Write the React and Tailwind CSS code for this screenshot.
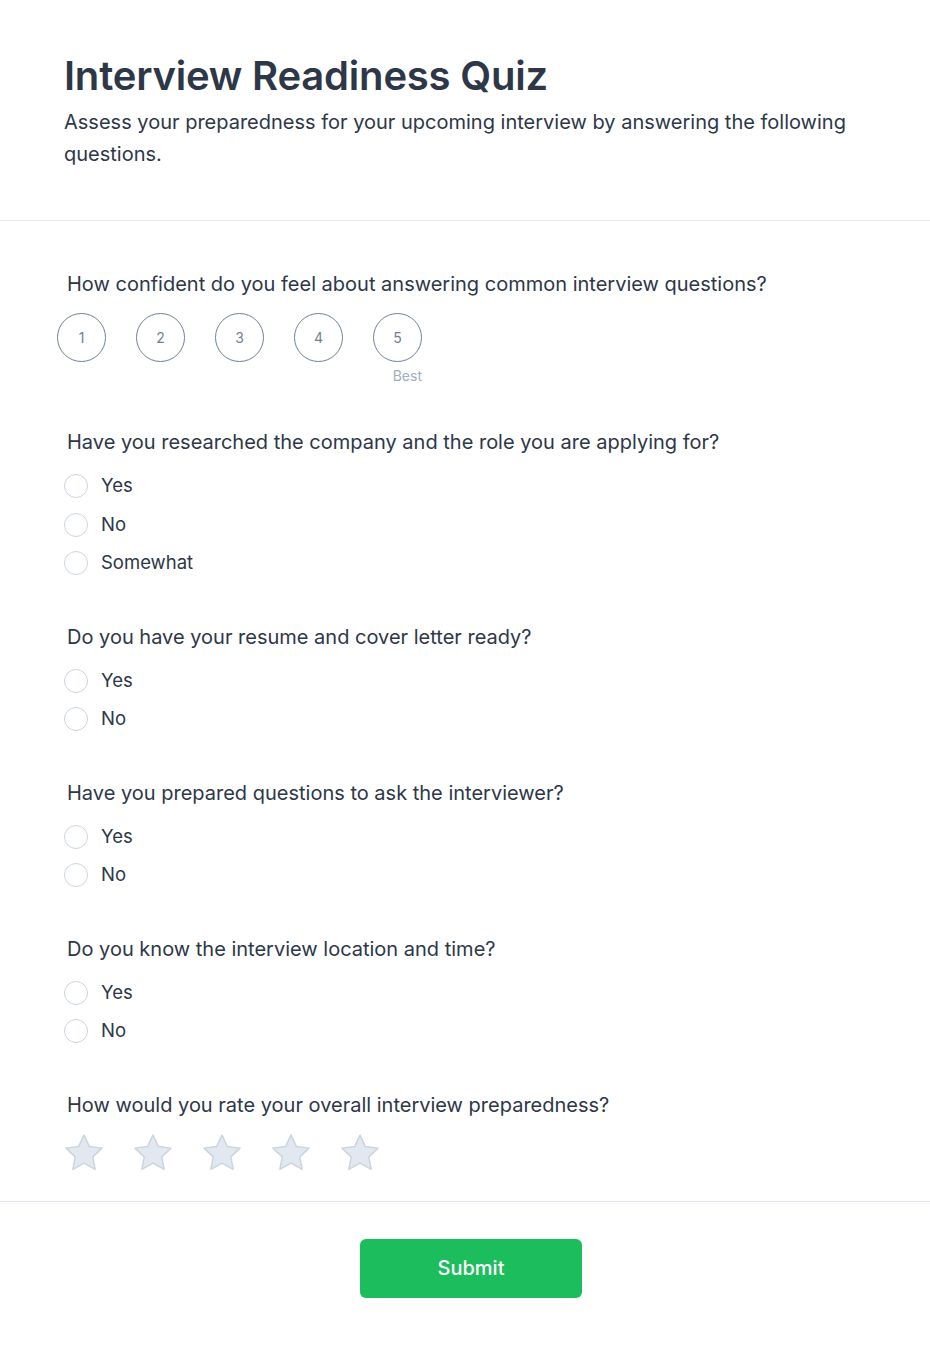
import { useState } from 'react'

const questions = [
  {
    id: 'research',
    text: 'Have you researched the company and the role you are applying for?',
    options: ['Yes', 'No', 'Somewhat'],
  },
  {
    id: 'resume',
    text: 'Do you have your resume and cover letter ready?',
    options: ['Yes', 'No'],
  },
  {
    id: 'questions',
    text: 'Have you prepared questions to ask the interviewer?',
    options: ['Yes', 'No'],
  },
  {
    id: 'location',
    text: 'Do you know the interview location and time?',
    options: ['Yes', 'No'],
  },
]

function StarIcon({ active }) {
  return (
    <svg width="44" height="44" viewBox="0 0 44 44">
      <path
        d="M22 4L27.41 15.56L40.07 17.13L30.75 25.84L33.17 38.37L22 32.2L10.83 38.37L13.25 25.84L3.93 17.13L16.59 15.56Z"
        fill={active ? '#f6c343' : '#e2e8f0'}
        stroke={active ? '#e0a800' : '#cbd5e0'}
        strokeWidth="1.5"
        strokeLinejoin="round"
      />
    </svg>
  )
}

export default function App() {
  const [confidence, setConfidence] = useState(null)
  const [answers, setAnswers] = useState({})
  const [stars, setStars] = useState(0)

  return (
    <div className="min-h-screen bg-white text-[#2d3748]" style={{ fontFamily: 'Inter, "Noto Sans", sans-serif' }}>
      <header className="px-16 pt-[52px] pb-[50px] border-b border-[#e2e8f0]">
        <h1 className="text-[40px] leading-[48px] font-semibold tracking-[-0.2px]">Interview Readiness Quiz</h1>
        <p className="mt-1.5 text-xl leading-8">
          Assess your preparedness for your upcoming interview by answering the following questions.
        </p>
      </header>

      <main className="px-16 pt-[49px] pb-[26px] border-b border-[#e2e8f0] flex flex-col gap-10">
        <section className="mb-[2px]">
          <h2 className="text-xl leading-7 pl-[3px]">
            How confident do you feel about answering common interview questions?
          </h2>
          <div className="mt-[15px] -ml-[7px] flex gap-[30px]">
            {[1, 2, 3, 4, 5].map((n) => (
              <div key={n} className="flex flex-col items-end">
                <button
                  type="button"
                  onClick={() => setConfidence(n)}
                  className={
                    confidence === n
                      ? 'w-[49px] h-[49px] rounded-full border border-[#1bbd5c] bg-[#1bbd5c] text-white text-sm flex items-center justify-center'
                      : 'w-[49px] h-[49px] rounded-full border border-[#718096] text-[#718096] text-sm flex items-center justify-center'
                  }
                >
                  {n}
                </button>
                {n === 5 && <span className="mt-1 text-sm leading-5 text-[#a0aec0]">Best</span>}
              </div>
            ))}
          </div>
        </section>

        {questions.map((q) => (
          <section key={q.id}>
            <h2 className="text-xl leading-7 pl-[3px]">{q.text}</h2>
            <div className="mt-[11px] flex flex-col">
              {q.options.map((opt) => (
                <label key={opt} className="h-[38.5px] flex items-center gap-[13px] cursor-pointer">
                  <span
                    onClick={() => setAnswers({ ...answers, [q.id]: opt })}
                    className={
                      answers[q.id] === opt
                        ? 'w-6 h-6 rounded-full border-[7px] border-[#1bbd5c] bg-white'
                        : 'w-6 h-6 rounded-full border-[1.5px] border-[#cbd5e0] bg-white'
                    }
                  />
                  <span className="text-[18.5px]">{opt}</span>
                </label>
              ))}
            </div>
          </section>
        ))}

        <section>
          <h2 className="text-xl leading-7 pl-[3px]">How would you rate your overall interview preparedness?</h2>
          <div className="mt-[12px] -ml-[2px] flex gap-[25px]">
            {[1, 2, 3, 4, 5].map((n) => (
              <button key={n} type="button" onClick={() => setStars(n)}>
                <StarIcon active={n <= stars} />
              </button>
            ))}
          </div>
        </section>
      </main>

      <footer className="pt-[37px] pb-[50px] pl-3 flex justify-center">
        <button
          type="button"
          className="w-[222px] h-[59px] rounded-md bg-[#1bbd5c] text-white text-xl font-medium"
        >
          Submit
        </button>
      </footer>
    </div>
  )
}
